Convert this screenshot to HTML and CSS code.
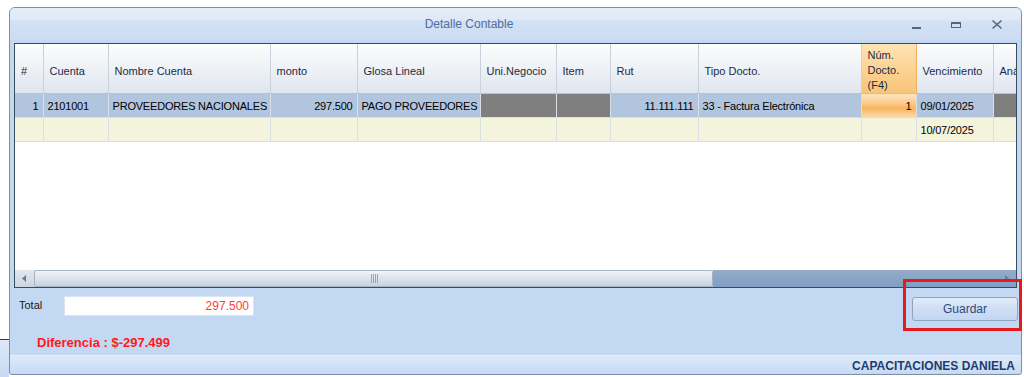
FILE: index.html
```html
<!DOCTYPE html>
<html lang="es">

<head>
  <meta charset="UTF-8">
  <meta name="viewport" content="width=device-width, initial-scale=1.0">
  <title>Detalle Contable</title>
  <link rel="stylesheet" href="styles.css">
</head>

<body>
  <div class="ventana-fondo"></div>

  <div class="ventana">
    <div class="barra-titulo">
      <span class="titulo">Detalle Contable</span>
      <div class="controles">
        <svg width="40" height="32" viewBox="0 0 40 32"><rect x="15" y="19" width="9" height="2" fill="#56667c"/></svg>
        <svg width="40" height="32" viewBox="0 0 40 32"><rect x="14.5" y="14.5" width="9" height="5" fill="none" stroke="#56667c"/><rect x="14" y="14" width="10" height="2" fill="#56667c"/></svg>
        <svg width="40" height="32" viewBox="0 0 40 32"><path d="M15.5 12.5 L24.5 20.5 M24.5 12.5 L15.5 20.5" stroke="#56667c" stroke-width="1.6" fill="none"/></svg>
      </div>
    </div>

    <div class="contenido">
      <div class="grilla">
        <div class="grilla-vista">
          <table>
            <colgroup>
              <col style="width: 28px">
              <col style="width: 65px">
              <col style="width: 162px">
              <col style="width: 87px">
              <col style="width: 123px">
              <col style="width: 76px">
              <col style="width: 54px">
              <col style="width: 88px">
              <col style="width: 163px">
              <col style="width: 55px">
              <col style="width: 77px">
              <col style="width: 60px">
            </colgroup>
            <thead>
              <tr>
                <th>#</th>
                <th>Cuenta</th>
                <th>Nombre Cuenta</th>
                <th>monto</th>
                <th>Glosa Lineal</th>
                <th>Uni.Negocio</th>
                <th>Item</th>
                <th>Rut</th>
                <th>Tipo Docto.</th>
                <th class="activa">Núm.<br>Docto.<br>(F4)</th>
                <th>Vencimiento</th>
                <th>Análisis</th>
              </tr>
            </thead>
            <tbody>
              <tr class="seleccionada">
                <td class="num">1</td>
                <td>2101001</td>
                <td>PROVEEDORES NACIONALES</td>
                <td class="num">297.500</td>
                <td>PAGO PROVEEDORES</td>
                <td class="bloqueada"></td>
                <td class="bloqueada"></td>
                <td class="num">11.111.111</td>
                <td>33 - Factura Electrónica</td>
                <td class="num editando">1</td>
                <td>09/01/2025</td>
                <td class="bloqueada"></td>
              </tr>
              <tr class="nueva">
                <td></td>
                <td></td>
                <td></td>
                <td></td>
                <td></td>
                <td></td>
                <td></td>
                <td></td>
                <td></td>
                <td></td>
                <td>10/07/2025</td>
                <td></td>
              </tr>
            </tbody>
          </table>
        </div>

        <div class="scroll-h">
          <div class="flecha izq">
            <svg width="19" height="17" viewBox="0 0 19 17"><path d="M7 8.5 L11 5 L11 12 Z" fill="#6b7b8f"/></svg>
          </div>
          <div class="pulgar"><span class="agarre"></span></div>
          <div class="pista">
            <svg width="19" height="17" viewBox="0 0 19 17"><path d="M12 8.5 L8 5 L8 12 Z" fill="#6b7b8f"/></svg>
          </div>
        </div>
      </div>

      <div class="pie">
        <div class="fila-total">
          <label>Total</label>
          <div class="caja-total">297.500</div>
          <button class="guardar">Guardar</button>
        </div>
        <div class="diferencia">Diferencia : $-297.499</div>
      </div>
    </div>

    <div class="barra-estado">CAPACITACIONES DANIELA</div>
  </div>

  <div class="marca"></div>
</body>

</html>
```

FILE: styles.css
```css
body {
  font-family: "Liberation Sans", Arial, sans-serif;
  background-color: #ffffff;
  margin: 0;
  padding: 7px 0 0 9px;
}

.ventana-fondo {
  position: absolute;
  left: 0;
  top: 339px;
  width: 9px;
  height: 38px;
  border-top: 1px solid #3a3a3a;
  background: linear-gradient(#dde8f7, #c6d9f3);
}

.ventana {
  position: relative;
  width: 1013px;
  box-sizing: border-box;
  border: 1px solid #7d8ea6;
  border-radius: 6px 6px 3px 3px;
  background-color: #c3d8f3;
  padding-bottom: 1px;
}

.barra-titulo {
  display: flex;
  align-items: center;
  height: 32px;
  border-radius: 5px 5px 0 0;
  background: linear-gradient(#e5edf9 0%, #dfe9f7 38%, #d3e1f5 40%, #cedcf2 100%);
}

.titulo {
  flex: 1;
  text-align: center;
  padding-left: 31px;
  font-size: 12px;
  color: #4f6f9c;
}

.controles {
  display: flex;
  padding-right: 4px;
}

.controles svg {
  display: block;
}

.contenido {
  padding: 3px 4px 0 4px;
}

.grilla {
  border: 1px solid #3f4a58;
  background-color: #ffffff;
}

.grilla-vista {
  height: 226px;
  overflow: hidden;
}

table {
  table-layout: fixed;
  border-collapse: collapse;
  width: 1038px;
  font-size: 11px;
}

th {
  height: 48px;
  box-sizing: border-box;
  padding: 4px 6px 0 6px;
  text-align: left;
  font-weight: normal;
  color: #1b2b46;
  background: linear-gradient(#fbfcfd, #eef1f6 50%, #dfe5ee);
  border-right: 1px solid #c9d1dc;
  border-bottom: 1px solid #b9c4d3;
  white-space: nowrap;
  overflow: hidden;
}

th.activa {
  line-height: 15px;
  background: linear-gradient(#fde4b6, #fbd394 50%, #f8c47a);
  border-left: 1px solid #f0b060;
  border-right: 1px solid #f0b060;
}

td {
  height: 23px;
  padding: 0 4px;
  border-right: 1px solid #d9dfe7;
  border-bottom: 1px solid #d9dfe7;
  white-space: nowrap;
  overflow: hidden;
  letter-spacing: -0.2px;
  color: #000000;
}

td.num {
  text-align: right;
}

.seleccionada td {
  background-color: #b2c5df;
}

.seleccionada td.bloqueada {
  background-color: #7f7f7f;
}

.seleccionada td.editando {
  background: linear-gradient(#fde6c2, #fbc47e 45%, #f9b45e 60%, #fcdcaa);
}

.nueva td {
  background-color: #f4f3dc;
}

.scroll-h {
  display: flex;
  height: 17px;
  background: linear-gradient(#e3e8ef, #cdd5e0);
}

.flecha {
  width: 19px;
  flex: none;
}

.flecha svg,
.pista svg {
  display: block;
}

.pulgar {
  width: 679px;
  box-sizing: border-box;
  border: 1px solid #a6b3c5;
  border-radius: 2px;
  background: linear-gradient(#f0f3f7, #dde3eb 50%, #c9d2de);
  display: flex;
  justify-content: center;
  align-items: center;
}

.agarre {
  width: 7px;
  height: 9px;
  margin-left: 1px;
  background: repeating-linear-gradient(90deg, #9aa6b6 0 1px, transparent 1px 2px);
}

.pista {
  flex: 1;
  display: flex;
  justify-content: flex-end;
  background: linear-gradient(#94acca, #819dc2);
}

.pie {
  height: 67px;
  box-sizing: border-box;
  padding-top: 8px;
}

.fila-total {
  display: flex;
  align-items: flex-start;
}

.fila-total label {
  width: 45px;
  margin-left: 5px;
  margin-top: 3px;
  font-size: 11px;
  color: #1a1a1a;
}

.caja-total {
  width: 190px;
  height: 20px;
  box-sizing: border-box;
  padding: 2px 4px 0 0;
  border: 1px solid #dbe4f0;
  background-color: #ffffff;
  text-align: right;
  font-size: 12px;
  color: #ff3b3b;
}

.guardar {
  margin-left: auto;
  margin-right: -1px;
  margin-top: 1px;
  width: 106px;
  height: 24px;
  border: 1px solid #8ea5c4;
  border-radius: 3px;
  background: linear-gradient(#e2ecf9, #cfdef4 50%, #c3d6f1);
  font-family: "Liberation Sans", Arial, sans-serif;
  font-size: 12px;
  color: #2b4b7d;
}

.diferencia {
  margin-top: 14px;
  padding-left: 23px;
  font-size: 13px;
  font-weight: bold;
  line-height: 16px;
  color: #ff1a1a;
}

.barra-estado {
  height: 18px;
  box-sizing: border-box;
  padding: 3px 6px 0 0;
  border-top: 1px solid #e6eefa;
  background: linear-gradient(#dde9f9, #c7dbf5);
  text-align: right;
  font-size: 12px;
  font-weight: bold;
  color: #1f3c6c;
}

.marca {
  position: absolute;
  left: 903px;
  top: 279px;
  width: 119px;
  height: 52px;
  box-sizing: border-box;
  border: 3px solid #e51b1b;
}
```
